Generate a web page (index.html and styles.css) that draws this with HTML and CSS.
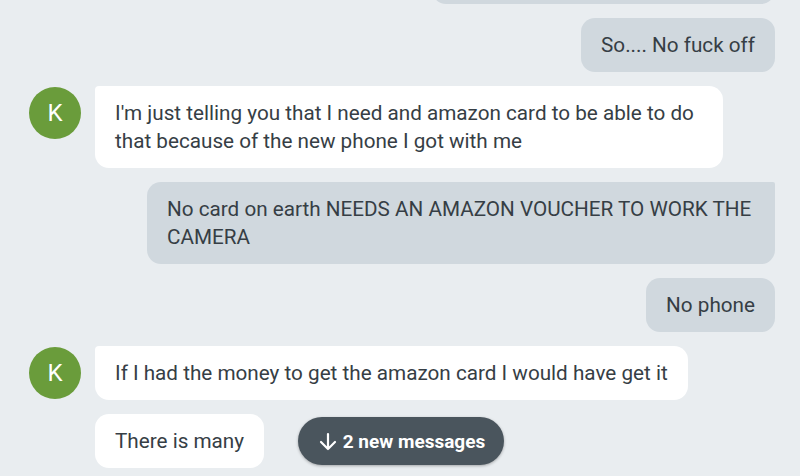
FILE: index.html
```html
<!DOCTYPE html>
<html>
<head>
<meta charset="utf-8">
<link rel="stylesheet" href="styles.css">
</head>
<body>
<div class="chat">
  <div class="row out"><div class="bubble out top-cut">&nbsp;</div></div>
  <div class="row out"><div class="bubble out">So.... No fuck off</div></div>
  <div class="row in">
    <div class="avatar">K</div>
    <div class="bubble in first">I'm just telling you that I need and amazon card to be able to do that because of the new phone I got with me</div>
  </div>
  <div class="row out"><div class="bubble out first">No card on earth NEEDS AN AMAZON VOUCHER TO WORK THE CAMERA</div></div>
  <div class="row out"><div class="bubble out">No phone</div></div>
  <div class="row in">
    <div class="avatar">K</div>
    <div class="bubble in first">If I had the money to get the amazon card I would have get it</div>
  </div>
  <div class="row in">
    <div class="avatar-space"></div>
    <div class="bubble in">There is many</div>
  </div>
</div>
<div class="newpill">
  <svg width="22" height="22" viewBox="0 0 22 22" aria-hidden="true"><path d="M11 3v15M4 11l7 7 7-7" fill="none" stroke="#fff" stroke-width="2.2" stroke-linecap="round" stroke-linejoin="round"/></svg>
  <span>2 new messages</span>
</div>
</body>
</html>
```
FILE: styles.css
```css
html, body {
  margin: 0;
  padding: 0;
  background: #e9edf0;
  font-family: Roboto, "Liberation Sans", sans-serif;
  color: #363e45;
  overflow: hidden;
  height: 476px;
}
.chat {
  display: flex;
  flex-direction: column;
  gap: 14px;
  padding: 0 25px 0 29px;
  margin-top: -50px;
}
.row {
  display: flex;
  align-items: flex-start;
}
.row.out {
  justify-content: flex-end;
}
.row.in {
  gap: 14px;
}
.avatar, .avatar-space {
  width: 52px;
  height: 52px;
  flex: none;
}
.avatar {
  border-radius: 50%;
  background: #6a9c3b;
  color: #fff;
  font-size: 24px;
  display: flex;
  align-items: center;
  justify-content: center;
  margin-top: 1px;
}
.bubble {
  font-size: 20.7px;
  line-height: 28px;
  padding: 13px 20px;
  border-radius: 14px;
  max-width: 588px;
}
.bubble.in {
  background: #ffffff;
}
.bubble.out {
  background: #d0d8de;
}
.bubble.in.first {
  border-top-left-radius: 4px;
}
.bubble.out.first {
  border-top-right-radius: 2px;
}
.bubble.top-cut {
  width: 303px;
  height: 28px;
}
.newpill {
  position: absolute;
  left: 298px;
  top: 417px;
  width: 206px;
  height: 48px;
  border-radius: 24px;
  background: #4a555d;
  color: #fff;
  font-weight: 700;
  font-size: 19px;
  display: flex;
  align-items: center;
  justify-content: center;
  gap: 4px;
  box-shadow: 0 1px 3px rgba(0,0,0,0.3);
}
.newpill svg {
  margin-top: 1px;
}
```
